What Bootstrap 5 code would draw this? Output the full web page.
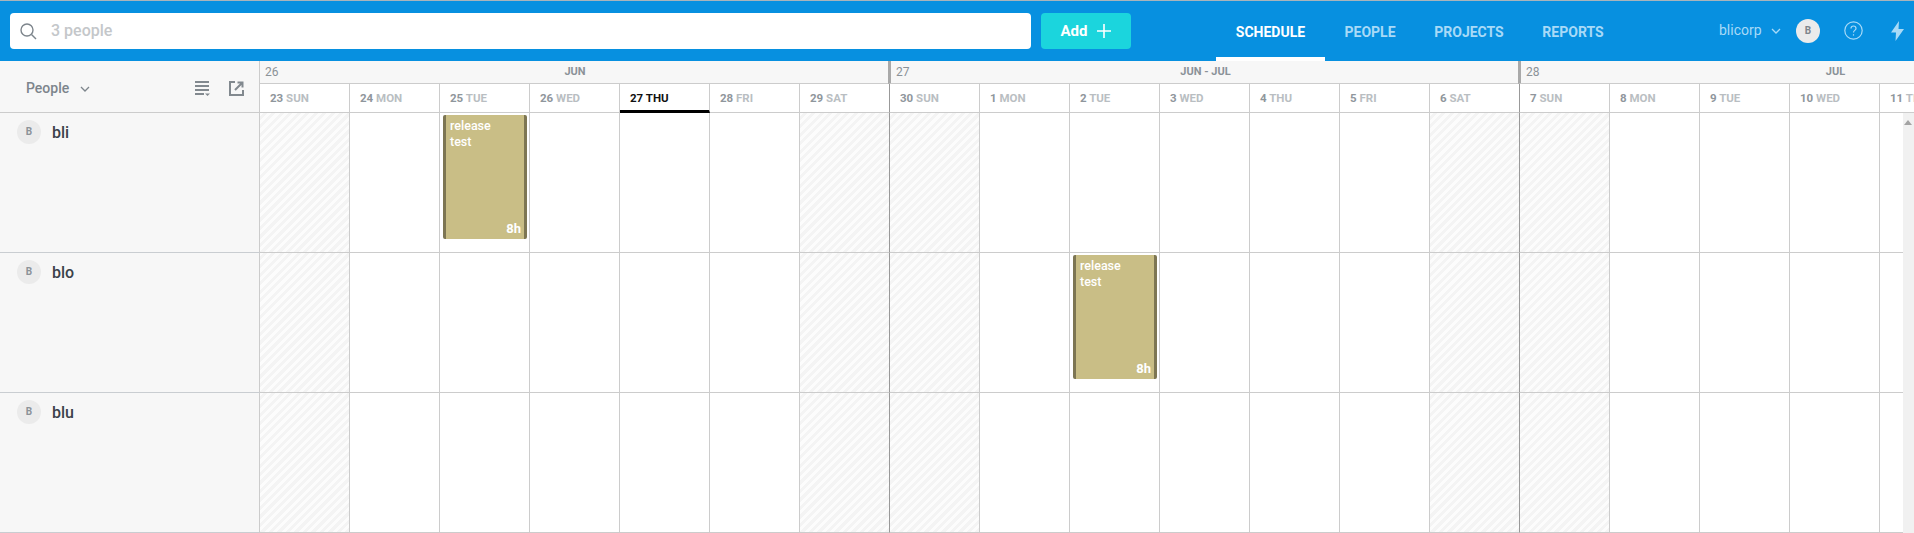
<!DOCTYPE html>
<html lang="en">

<head>
    <meta charset="UTF-8">
    <title>Schedule</title>
    <link href="https://cdn.jsdelivr.net/npm/bootstrap@5.3.5/dist/css/bootstrap.min.css" rel="stylesheet">
    <style>
        html, body {
            height: 533px;
            overflow: hidden;
        }

        body {
            margin: 0;
            background: #fff;
            font-family: Roboto, "Liberation Sans", sans-serif;
            color: #3b424a;
        }

        /* Top bar */
        .topbar {
            height: 61px;
            background: #0790e0;
            border-top: 1px solid #a9b4bb;
            padding-left: 10px;
        }

        .search-box {
            width: 1021px;
            height: 36px;
            margin-top: 12px;
            padding-left: 10px;
            background: #fff;
            border-radius: 4px;
        }

        .search-box input {
            border: 0;
            outline: 0;
            flex: 1;
            margin-left: 12px;
            font-size: 16px;
            font-weight: 500;
            background: transparent;
        }

        .search-box input::placeholder {
            color: #c4c7ca;
        }

        .add-btn {
            width: 90px;
            height: 36px;
            margin: 12px 0 0 10px;
            padding: 0;
            border: 0;
            border-radius: 4px;
            background: #1bd5dd;
            color: #fff;
            font-size: 15px;
            font-weight: 700;
            gap: 10px;
        }

        .add-btn:hover {
            background: #1bd5dd;
            color: #fff;
        }

        .main-links {
            margin-left: 85px;
        }

        .main-link {
            display: block;
            height: 60px;
            padding-top: 23px;
            width: 109px;
            text-align: center;
            color: #a8daf7;
            font-size: 14px;
            font-weight: 700;
            line-height: 17px;
            text-decoration: none;
            white-space: nowrap;
        }

        .main-link.on {
            color: #fff;
            border-bottom: 4px solid #fff;
        }

        .main-link.w-people { width: 90px; }
        .main-link.w-projects { width: 108px; }
        .main-link.w-reports { width: 100px; }

        .user-area {
            margin-left: 96px;
            color: #a8daf7;
            font-size: 14px;
            padding-bottom: 1px;
        }

        .user-name {
            width: 44px;
            white-space: nowrap;
        }

        .user-avatar {
            width: 24px;
            height: 24px;
            margin-left: 17px;
            background: #ebebeb;
            color: #7d858c;
            font-size: 10px;
            font-weight: 700;
        }

        .user-chevron { margin-left: 8px; margin-right: -2px; }
        .help-icon { margin-left: 24px; }
        .bolt-icon { margin-left: 28px; }

        /* Schedule header */
        .sched-head {
            height: 52px;
            overflow: hidden;
        }

        .side-head {
            flex: 0 0 260px;
            height: 52px;
            background: #f7f7f7;
            border-right: 1px solid #ccc;
            border-bottom: 1px solid #ccc;
            padding: 0 15px 0 26px;
            color: #7d858c;
            font-size: 14px;
            font-weight: 500;
        }

        .people-chevron { margin-left: 11px; }
        .open-icon { margin-left: 18px; }

        .week-block {
            flex: 0 0 630px;
        }

        .week-top {
            height: 23px;
            background: #f7f7f7;
            border-bottom: 1px solid #ccc;
            position: relative;
            text-align: center;
            color: #8b9298;
            font-size: 11px;
            font-weight: 700;
            line-height: 22px;
        }

        .week-block + .week-block .week-top {
            border-left: 3px solid #a9a9a9;
            margin-left: -2px;
        }

        .week-num {
            position: absolute;
            left: 5px;
            top: 0;
            font-size: 12px;
            font-weight: 400;
        }

        .day-cell {
            flex: 0 0 90px;
            height: 29px;
            padding-left: 10px;
            background: #fff;
            border-right: 1px solid #ccc;
            border-bottom: 1px solid #ccc;
            color: #8f969c;
            font-size: 11.5px;
            font-weight: 700;
            line-height: 28px;
            white-space: nowrap;
        }

        .day-cell span {
            color: #b9bec2;
        }

        .day-cell.today {
            color: #111;
            border-bottom: 3px solid #000;
        }

        .day-cell.today span {
            color: #111;
        }

        .day-cell.week-end {
            border-right: 1px solid #999;
        }

        /* Rows */
        .person-row {
            height: 140px;
        }

        .person-name {
            flex: 0 0 260px;
            background: #f7f7f7;
            border-right: 1px solid #ccc;
            border-bottom: 1px solid #c9cdd1;
            padding: 7px 0 0 17px;
            font-size: 16px;
            font-weight: 500;
            line-height: 24px;
        }

        .person-name span {
            padding-top: 1px;
        }

        .person-avatar {
            width: 24px;
            height: 24px;
            margin-right: 11px;
            background: #ebebeb;
            color: #8b9298;
            font-size: 10px;
            font-weight: 700;
        }

        .grid-cell {
            flex: 0 0 90px;
            border-right: 1px solid #ccc;
            border-bottom: 1px solid #ccc;
            padding: 2px 2px 0 3px;
        }

        .grid-cell.week-end {
            border-right: 1px solid #999;
        }

        .grid-cell.off {
            background: repeating-linear-gradient(-45deg, #f4f4f4 0 3px, #fcfcfc 3px 6px);
        }

        .event-box {
            height: 124px;
            padding: 3px 3px 2px 4px;
            background: #c9be86;
            border-left: 3px solid #7d7653;
            border-right: 3px solid #7d7653;
            border-radius: 2px;
            color: #fff;
            font-size: 12.5px;
            font-weight: 500;
            line-height: 16px;
        }

        .event-box .hours {
            margin-top: auto;
            text-align: right;
            font-size: 13px;
            font-weight: 700;
        }

        .rows-wrap {
            overflow: hidden;
            position: relative;
        }

        .fake-scroll {
            position: absolute;
            top: 0;
            right: 0;
            bottom: 0;
            width: 11px;
            background: #f1f1f1;
        }

        .fake-scroll::before {
            content: "";
            position: absolute;
            top: 7px;
            left: 1px;
            border: 4px solid transparent;
            border-top: 0;
            border-bottom: 5px solid #a3a3a3;
        }
    </style>
</head>

<body>

    <!-- Top bar -->
    <div class="topbar d-flex">
        <div class="search-box d-flex align-items-center">
            <svg width="17" height="17" viewBox="0 0 17 17" fill="none" stroke="#7d858c" stroke-width="1.4">
                <circle cx="7" cy="7" r="6"></circle>
                <path d="M11.5 11.5 16 16"></path>
            </svg>
            <input type="text" placeholder="3 people">
        </div>
        <button type="button" class="btn add-btn d-flex align-items-center justify-content-center">
            Add
            <svg width="14" height="14" viewBox="0 0 14 14" stroke="#fff" stroke-width="1.6">
                <path d="M7 0v14M0 7h14"></path>
            </svg>
        </button>
        <div class="main-links d-flex">
            <a class="main-link on" href="#">SCHEDULE</a>
            <a class="main-link w-people" href="#">PEOPLE</a>
            <a class="main-link w-projects" href="#">PROJECTS</a>
            <a class="main-link w-reports" href="#">REPORTS</a>
        </div>
        <div class="user-area d-flex align-items-center">
            <span class="user-name">blicorp</span>
            <svg class="user-chevron" width="10" height="6" viewBox="0 0 10 6" fill="none" stroke="#a8daf7" stroke-width="1.3">
                <path d="M1 1l4 4 4-4"></path>
            </svg>
            <div class="user-avatar rounded-circle d-flex align-items-center justify-content-center">B</div>
            <svg class="help-icon" width="19" height="19" viewBox="0 0 19 19" fill="none" stroke="#a8daf7" stroke-width="1.2">
                <circle cx="9.5" cy="9.5" r="8.7"></circle>
                <path d="M7 7.4c0-3.2 5-3.2 5 0 0 2-2.5 2-2.5 4"></path>
                <path d="M9.5 13.2v1.4"></path>
            </svg>
            <svg class="bolt-icon" width="13" height="20" viewBox="0 0 13 20" fill="#a8daf7">
                <path d="M8 0 0 11.5h5L4.5 20 13 8H7.5z"></path>
            </svg>
        </div>
    </div>

    <!-- Schedule header -->
    <div class="sched-head d-flex">
        <div class="side-head d-flex align-items-center">
            <span class="mt-1">People</span>
            <svg class="people-chevron mt-1" width="10" height="6" viewBox="0 0 10 6" fill="none" stroke="#7d858c" stroke-width="1.3">
                <path d="M1 1l4 4 4-4"></path>
            </svg>
            <svg class="ms-auto mt-1" width="16" height="15" viewBox="0 0 16 15" stroke="#82898f" stroke-width="1.8" fill="none">
                <path d="M0 1h14M0 5h14M0 9h14M0 13h9"></path>
                <path d="M10 12.5h5l-2.5 2.5z" fill="#82898f" stroke="none"></path>
            </svg>
            <svg class="open-icon mt-1" width="15" height="15" viewBox="0 0 15 15" stroke="#82898f" stroke-width="2" fill="none">
                <path d="M6 1H1v13h13V9"></path>
                <path d="M6 9l7-7M8.5 1.5H13.5V6.5"></path>
            </svg>
        </div>
        <div id="week-heads" class="d-flex flex-grow-1 overflow-hidden"></div>
    </div>

    <!-- Rows -->
    <div id="rows" class="rows-wrap">
        <div class="fake-scroll"></div>
    </div>

    <script src="https://cdn.jsdelivr.net/npm/bootstrap@5.3.5/dist/js/bootstrap.bundle.min.js"></script>
    <script>
        const weeks = [
            { num: 26, label: "JUN", days: ["23 SUN", "24 MON", "25 TUE", "26 WED", "27 THU", "28 FRI", "29 SAT"] },
            { num: 27, label: "JUN - JUL", days: ["30 SUN", "1 MON", "2 TUE", "3 WED", "4 THU", "5 FRI", "6 SAT"] },
            { num: 28, label: "JUL", days: ["7 SUN", "8 MON", "9 TUE", "10 WED", "11 THU"] }
        ];
        const people = [
            { name: "bli", eventCol: 2 },
            { name: "blo", eventCol: 9 },
            { name: "blu", eventCol: -1 }
        ];
        const TODAY = 4;
        const COLS = 19;

        let heads = "";
        weeks.forEach((week, w) => {
            let cells = "";
            week.days.forEach((day, d) => {
                const [num, name] = day.split(" ");
                const classes = ["day-cell"];
                if (w * 7 + d === TODAY) classes.push("today");
                if (d === 6) classes.push("week-end");
                cells += `<div class="${classes.join(" ")}">${num} <span>${name}</span></div>`;
            });
            heads += `<div class="week-block">
                <div class="week-top"><span class="week-num">${week.num}</span>${week.label}</div>
                <div class="d-flex">${cells}</div>
            </div>`;
        });
        document.getElementById("week-heads").innerHTML = heads;

        let rows = "";
        people.forEach(person => {
            let cells = "";
            for (let i = 0; i < COLS; i++) {
                const classes = ["grid-cell"];
                if (i % 7 === 0 || i % 7 === 6) classes.push("off");
                if (i % 7 === 6) classes.push("week-end");
                const event = i === person.eventCol
                    ? `<div class="event-box d-flex flex-column"><div>release<br>test</div><div class="hours">8h</div></div>`
                    : "";
                cells += `<div class="${classes.join(" ")}">${event}</div>`;
            }
            rows += `<div class="person-row d-flex">
                <div class="person-name d-flex align-items-start">
                    <div class="person-avatar rounded-circle d-flex align-items-center justify-content-center">B</div>
                    <span>${person.name}</span>
                </div>
                ${cells}
            </div>`;
        });
        document.getElementById("rows").insertAdjacentHTML("afterbegin", rows);
    </script>
</body>

</html>
